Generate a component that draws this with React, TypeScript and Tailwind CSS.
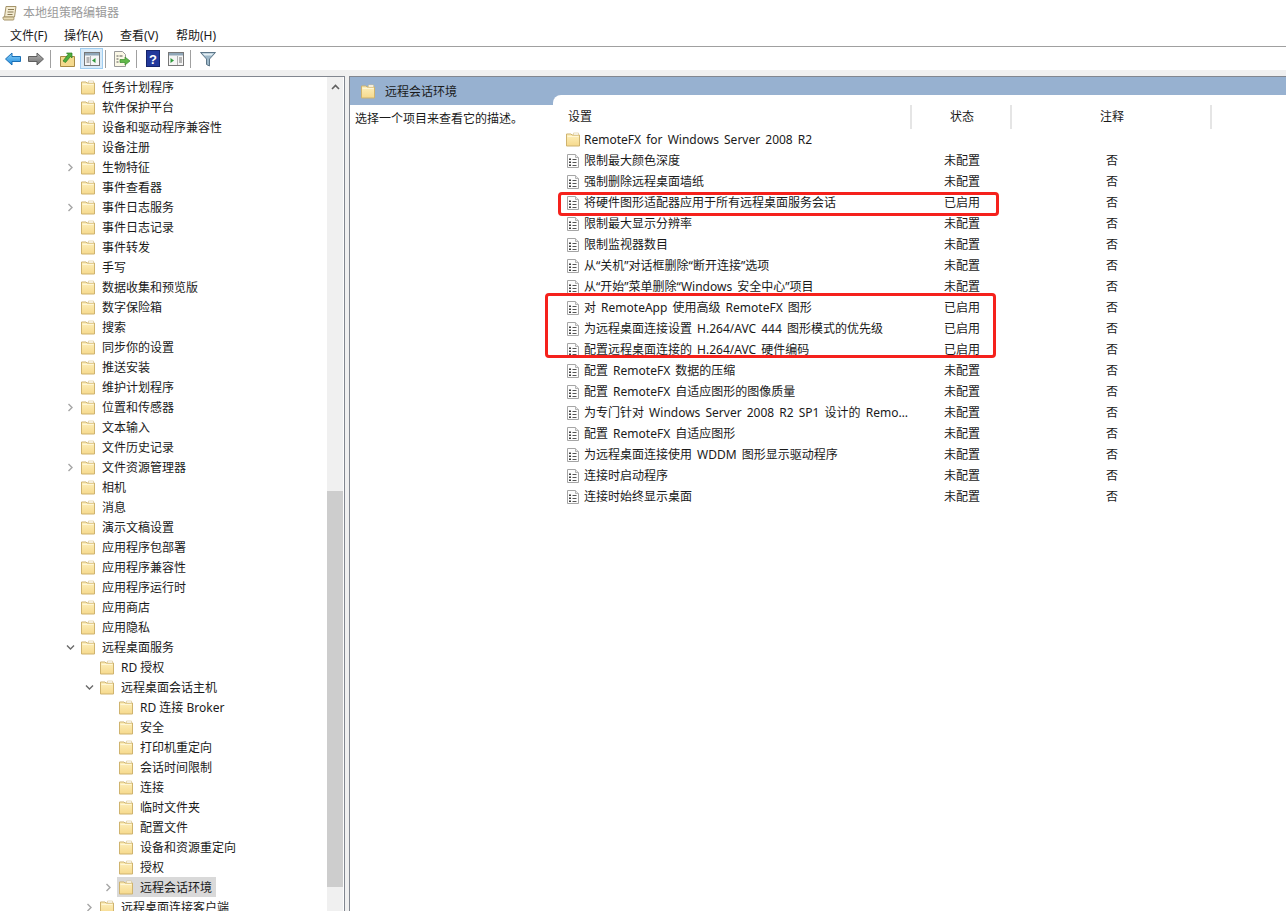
const font = "[font-family:'Noto_Sans','Noto_Sans_CJK_SC',sans-serif]";

type TreeItem = { name: string; level: number; arrow?: "open" | "closed"; selected?: boolean };

const tree: TreeItem[] = [
  { name: "任务计划程序", level: 0 },
  { name: "软件保护平台", level: 0 },
  { name: "设备和驱动程序兼容性", level: 0 },
  { name: "设备注册", level: 0 },
  { name: "生物特征", level: 0, arrow: "closed" },
  { name: "事件查看器", level: 0 },
  { name: "事件日志服务", level: 0, arrow: "closed" },
  { name: "事件日志记录", level: 0 },
  { name: "事件转发", level: 0 },
  { name: "手写", level: 0 },
  { name: "数据收集和预览版", level: 0 },
  { name: "数字保险箱", level: 0 },
  { name: "搜索", level: 0 },
  { name: "同步你的设置", level: 0 },
  { name: "推送安装", level: 0 },
  { name: "维护计划程序", level: 0 },
  { name: "位置和传感器", level: 0, arrow: "closed" },
  { name: "文本输入", level: 0 },
  { name: "文件历史记录", level: 0 },
  { name: "文件资源管理器", level: 0, arrow: "closed" },
  { name: "相机", level: 0 },
  { name: "消息", level: 0 },
  { name: "演示文稿设置", level: 0 },
  { name: "应用程序包部署", level: 0 },
  { name: "应用程序兼容性", level: 0 },
  { name: "应用程序运行时", level: 0 },
  { name: "应用商店", level: 0 },
  { name: "应用隐私", level: 0 },
  { name: "远程桌面服务", level: 0, arrow: "open" },
  { name: "RD 授权", level: 1 },
  { name: "远程桌面会话主机", level: 1, arrow: "open" },
  { name: "RD 连接 Broker", level: 2 },
  { name: "安全", level: 2 },
  { name: "打印机重定向", level: 2 },
  { name: "会话时间限制", level: 2 },
  { name: "连接", level: 2 },
  { name: "临时文件夹", level: 2 },
  { name: "配置文件", level: 2 },
  { name: "设备和资源重定向", level: 2 },
  { name: "授权", level: 2 },
  { name: "远程会话环境", level: 2, arrow: "closed", selected: true },
  { name: "远程桌面连接客户端", level: 1, arrow: "closed" },
];

const policies: [string, string][] = [
  ["限制最大颜色深度", "未配置"],
  ["强制删除远程桌面墙纸", "未配置"],
  ["将硬件图形适配器应用于所有远程桌面服务会话", "已启用"],
  ["限制最大显示分辨率", "未配置"],
  ["限制监视器数目", "未配置"],
  ["从“关机”对话框删除“断开连接”选项", "未配置"],
  ["从“开始”菜单删除“Windows 安全中心”项目", "未配置"],
  ["对 RemoteApp 使用高级 RemoteFX 图形", "已启用"],
  ["为远程桌面连接设置 H.264/AVC 444 图形模式的优先级", "已启用"],
  ["配置远程桌面连接的 H.264/AVC 硬件编码", "已启用"],
  ["配置 RemoteFX 数据的压缩", "未配置"],
  ["配置 RemoteFX 自适应图形的图像质量", "未配置"],
  ["为专门针对 Windows Server 2008 R2 SP1 设计的 RemoteFX 客户端", "未配置"],
  ["配置 RemoteFX 自适应图形", "未配置"],
  ["为远程桌面连接使用 WDDM 图形显示驱动程序", "未配置"],
  ["连接时启动程序", "未配置"],
  ["连接时始终显示桌面", "未配置"],
];

const Defs = () => (
  <svg width="0" height="0" className="absolute">
    <defs>
      <linearGradient id="folderFill" x1="0" y1="0" x2="0" y2="1">
        <stop offset="0" stopColor="#fdf0bd" />
        <stop offset="1" stopColor="#f6d98c" />
      </linearGradient>
      <linearGradient id="blueArrow" x1="0" y1="0" x2="0" y2="1">
        <stop offset="0" stopColor="#8fd2f8" />
        <stop offset="1" stopColor="#1c8ade" />
      </linearGradient>
      <linearGradient id="grayArrow" x1="0" y1="0" x2="0" y2="1">
        <stop offset="0" stopColor="#b5b5b5" />
        <stop offset="1" stopColor="#6e6e6e" />
      </linearGradient>
    </defs>
  </svg>
);

const Folder = () => (
  <svg width="16" height="15" viewBox="0 0 16 15" className="shrink-0">
    <path d="M1.5 2 H6 L7 3 H14.5 V14 H1.5 Z" fill="url(#folderFill)" stroke="#cfb36e" />
    <path d="M8.5 1 H13.5 V3 H8.5 Z" fill="#ffffff" stroke="#d8c48c" strokeWidth="0.6" />
    <path d="M2.5 4.5 H13.5" stroke="#fff6d6" />
  </svg>
);

const PolicyIcon = () => (
  <svg width="14" height="15" viewBox="0 0 14 15" className="shrink-0">
    <path d="M1.5 1.5 H9.5 L12.5 4.5 V14.5 H1.5 Z" fill="#fdfdfd" stroke="#a5a5a5" />
    <path d="M9.5 1.5 V4.5 H12.5" fill="#e8e8e8" stroke="#b5b5b5" />
    <path d="M3 5.5h2V7H3zM3 8.5h2V10H3zM3 11.5h2V13H3z" fill="#3d3d3d" />
    <path d="M6.5 6.5h4M6.5 9.5h4M6.5 12.5h4" stroke="#555555" />
  </svg>
);

const Chevron = ({ open }: { open: boolean }) => (
  <svg width="9" height="9" viewBox="0 0 9 9" className="shrink-0">
    {open ? (
      <path d="M1 2.5 L4.5 6 L8 2.5" fill="none" stroke="#6a6a6a" strokeWidth="1.4" />
    ) : (
      <path d="M2.5 1 L6 4.5 L2.5 8" fill="none" stroke="#a6a6a6" strokeWidth="1.4" />
    )}
  </svg>
);

const Sep = ({ className }: { className: string }) => <div className={`w-px h-[18px] bg-[#a0a0a0] ${className}`} />;

const Toolbar = () => (
  <div className="flex items-center h-[23px] pl-[5px] bg-white">
    <svg width="16" height="14" viewBox="0 0 16 14">
      <path d="M0.5 7 L7 1 V4.5 H15.5 V9.5 H7 V13 Z" fill="url(#blueArrow)" stroke="#1a6fb5" strokeLinejoin="round" />
    </svg>
    <svg width="16" height="14" viewBox="0 0 16 14" className="ml-[7px]">
      <path d="M15.5 7 L9 1 V4.5 H0.5 V9.5 H9 V13 Z" fill="url(#grayArrow)" stroke="#5f5f5f" strokeLinejoin="round" />
    </svg>
    <Sep className="ml-[6px]" />
    <svg width="15" height="16" viewBox="0 0 15 16" className="ml-[9px]">
      <path d="M0.5 5.5 H14.5 V15.5 H0.5 Z" fill="#f4d98d" stroke="#a98a45" />
      <path d="M3 10 L8 3.5 L6.5 2 H12 V7 L10.5 5.5 L5.5 11.5 Z" fill="#4fae3c" stroke="#2f7d25" strokeWidth="0.7" />
    </svg>
    <div className="ml-[5px] w-[23px] h-[21px] flex items-center justify-center bg-[#d9ebf9] border border-[#9fcdf0]">
      <svg width="16" height="14" viewBox="0 0 16 14">
        <rect x="0.5" y="0.5" width="15" height="13" fill="#f5f5f5" stroke="#777777" />
        <rect x="1" y="1" width="14" height="2.5" fill="#8fa6b8" />
        <path d="M6.5 4V13" stroke="#b0b0b0" />
        <path d="M8 8.5 L11.5 6 V11 Z" fill="#2f9a3a" />
        <path d="M2.5 6h3M2.5 8h3M2.5 10h3" stroke="#777777" />
      </svg>
    </div>
    <Sep className="ml-[2px]" />
    <svg width="17" height="16" viewBox="0 0 17 16" className="ml-[8px]">
      <path d="M0.5 0.5 H8.5 L11.5 3.5 V15.5 H0.5 Z" fill="#fbf8e6" stroke="#999999" />
      <path d="M2.5 5h2M2.5 8h2M2.5 11h2M5.5 5h3" stroke="#555555" />
      <path d="M6 8.5 H11 V6 L16 10 L11 14 V11.5 H6 Z" fill="#62b94a" stroke="#3a8a2c" strokeWidth="0.7" />
    </svg>
    <Sep className="ml-[5px]" />
    <svg width="14" height="17" viewBox="0 0 14 17" className="ml-[9px]">
      <rect x="0.5" y="0.5" width="13" height="16" fill="#23399b" stroke="#15246b" />
      <text x="7" y="13.5" textAnchor="middle" fontSize="13" fontWeight="700" fill="#ffffff" fontFamily="Liberation Sans">?</text>
    </svg>
    <svg width="16" height="14" viewBox="0 0 16 14" className="ml-[8px]">
      <rect x="0.5" y="0.5" width="15" height="13" fill="#f5f5f5" stroke="#777777" />
      <rect x="1" y="1" width="14" height="2.5" fill="#8fa6b8" />
      <path d="M2.5 6 L6 8.5 L2.5 11 Z" fill="#2f9a3a" />
      <path d="M9.5 4V13" stroke="#b0b0b0" />
      <path d="M11 6h3M11 8h3M11 10h3" stroke="#777777" />
    </svg>
    <Sep className="ml-[6px]" />
    <svg width="16" height="16" viewBox="0 0 16 16" className="ml-[9px]">
      <path d="M0.5 1.5 H15.5 L9.5 8 V15 L6.5 13.5 V8 Z" fill="#9db8c9" stroke="#5d7688" />
      <path d="M2.5 2.5 H13.5 L11.5 4.5 H4.5 Z" fill="#e4eef4" />
    </svg>
  </div>
);

const TreeRow = ({ item }: { item: TreeItem }) => (
  <div
    className={`flex items-center h-5 ${
      item.level === 0 ? "pl-[65px]" : item.level === 1 ? "pl-[84px]" : "pl-[103px]"
    }`}
  >
    <div className="w-[10px] shrink-0 flex justify-center">
      {item.arrow && <Chevron open={item.arrow === "open"} />}
    </div>
    <div className={`flex items-center h-5 ml-[4px] pl-[1px] pr-[4px] ${item.selected ? "bg-[#d9d9d9]" : ""}`}>
      <Folder />
      <span className="ml-[6px] pt-[2px] whitespace-nowrap leading-5">{item.name}</span>
    </div>
  </div>
);

const App = () => (
  <div className={`${font} relative w-[1286px] h-[911px] overflow-hidden bg-[#f0f0f0] text-[12px] text-[#1a1a1a]`}>
    <Defs />
    {/* title bar */}
    <div className="flex items-center h-[23px] pt-[2px] bg-white pl-[2px] text-[#9a9a9a]">
      <svg width="16" height="16" viewBox="0 0 16 16">
        <path d="M4 1.5 H14 L12.5 12 H2.5 Z" fill="#f4ecd2" stroke="#a5946a" />
        <path d="M1 12 H11.5 C12 13 12 14 11.5 15 H2 C1 14.5 1 13 1 12 Z" fill="#e9dcb4" stroke="#a5946a" />
        <path d="M6 4.5h6M5.5 7h6M5.5 9.5h5" stroke="#8a7a55" />
      </svg>
      <span className="ml-[5px]">本地组策略编辑器</span>
    </div>

    {/* menu bar */}
    <div className="flex items-center h-[21px] pt-[2px] box-content pb-0 bg-white pl-[10px] gap-[16px] border-b border-[#a0a0a0]">
      <span className="w-[38px] whitespace-nowrap">文件(F)</span>
      <span className="w-[40px] whitespace-nowrap">操作(A)</span>
      <span className="w-[40px] whitespace-nowrap">查看(V)</span>
      <span className="w-[41px] whitespace-nowrap">帮助(H)</span>
    </div>

    <Toolbar />

    <div className="flex h-[841px] pt-[6px] gap-[4px]">
      {/* left tree */}
      <div className="flex w-[345px] h-[835px] border-t border-r border-[#828790] bg-white overflow-hidden">
        <div className="flex-1 min-w-0">
          {tree.map((item) => (
            <TreeRow key={item.name} item={item} />
          ))}
        </div>
        <div className="w-[16px] shrink-0 bg-[#f0f0f0] mr-px flex flex-col">
          <div className="h-[20px] flex items-center justify-center">
            <svg width="9" height="6" viewBox="0 0 9 6">
              <path d="M1 5 L4.5 1.5 L8 5" fill="none" stroke="#606060" strokeWidth="1.6" />
            </svg>
          </div>
          <div className="mt-[394px] h-[396px] bg-[#cdcdcd]" />
        </div>
      </div>

      {/* right pane */}
      <div className="flex-1 min-w-0 border-l border-t border-[#828790] bg-white flex flex-col">
        <div className="flex items-center h-[28px] shrink-0 bg-[#97b1d0] pl-[10px]">
          <Folder />
          <span className="ml-[9px] pt-[2px]">远程会话环境</span>
        </div>
        <div className="flex flex-1 min-h-0 relative">
          <div className="absolute left-[203px] -top-[10px] right-0 h-[10px] bg-white rounded-tl-[8px]" />
          <div className="w-[204px] shrink-0 pl-[5px] pt-[5px] leading-[18px]">选择一个项目来查看它的描述。</div>
          <div className="flex-1 min-w-0">
            <div className="flex h-[24px] items-center">
              <div className="w-[358px] h-[24px] pl-[14px] leading-[24px] border-r-2 border-[#e5e5e5]">设置</div>
              <div className="w-[100px] h-[24px] pl-[2px] text-center leading-[24px] border-r-2 border-[#e5e5e5]">状态</div>
              <div className="w-[200px] h-[24px] pl-[2px] text-center leading-[24px] border-r-2 border-[#e5e5e5]">注释</div>
            </div>
            <div className="flex items-center h-[21px] pl-[11px]">
              <Folder />
              <span className="ml-[3px] [word-spacing:2px]">RemoteFX for Windows Server 2008 R2</span>
            </div>
            {policies.map(([name, state]) => (
              <div key={name} className="flex items-center h-[21px]">
                <div className="w-[358px] flex items-center pl-[12px] pr-[2px]">
                  <PolicyIcon />
                  <span className="ml-[4px] truncate [word-spacing:2px]">{name}</span>
                </div>
                <div className="w-[100px] text-center">{state}</div>
                <div className="w-[200px] text-center">否</div>
              </div>
            ))}
          </div>
        </div>
      </div>
    </div>

    {/* red annotations */}
    <div className="absolute left-[558px] top-[192px] w-[441px] h-[24px] border-[3px] border-[#f5211c] rounded-[4px]" />
    <div className="absolute left-[545px] top-[293px] w-[451px] h-[65px] border-[3px] border-[#f5211c] rounded-[4px]" />
  </div>
);

export default App;
